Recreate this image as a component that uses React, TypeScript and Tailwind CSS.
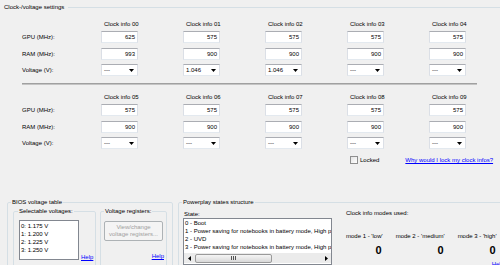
import React from 'react';

type ClockCol = { gpu: string; ram: string; volt: string };

const topCols: ClockCol[] = [
  { gpu: '625', ram: '993', volt: '---' },
  { gpu: '575', ram: '900', volt: '1.046' },
  { gpu: '575', ram: '900', volt: '1.046' },
  { gpu: '575', ram: '900', volt: '---' },
  { gpu: '575', ram: '900', volt: '---' },
];

const bottomCols: ClockCol[] = [0, 1, 2, 3, 4].map(() => ({ gpu: '575', ram: '900', volt: '---' }));

const TextBox = ({ value }: { value: string }) => (
  <div className="h-[12px] w-[37px] bg-white border border-[#dbdfe6] border-t-[#abadb3] border-b-[#e3e9ef] flex items-center justify-end pr-[2px]">
    {value}
  </div>
);

const Combo = ({ value }: { value: string }) => (
  <div className="h-[12px] w-[37px] bg-white border border-[#dbdfe6] border-t-[#abadb3] border-b-[#e3e9ef] flex items-center justify-between pl-[2px] pr-[3px]">
    <span>{value}</span>
    <svg width="5" height="3" viewBox="0 0 5 3">
      <path d="M0 0h5L2.5 3z" fill="#000" />
    </svg>
  </div>
);

// label column + 5 value columns, 82px apart
const rowGrid = 'grid grid-cols-[34px_repeat(5,37px)] gap-x-[45px] items-center';

const ClockBlock = ({ start, cols }: { start: number; cols: ClockCol[] }) => (
  <div className="ml-[22px] flex flex-col">
    <div className={`${rowGrid} h-[10px]`}>
      <div />
      {cols.map((_, i) => (
        <div key={i} className="pl-[3px] whitespace-nowrap">
          Clock info {String(start + i).padStart(2, '0')}
        </div>
      ))}
    </div>
    <div className={`${rowGrid} mt-[2px]`}>
      <div className="whitespace-nowrap">GPU (MHz):</div>
      {cols.map((c, i) => (
        <TextBox key={i} value={c.gpu} />
      ))}
    </div>
    <div className={`${rowGrid} mt-[5px]`}>
      <div className="whitespace-nowrap">RAM (MHz):</div>
      {cols.map((c, i) => (
        <TextBox key={i} value={c.ram} />
      ))}
    </div>
    <div className={`${rowGrid} mt-[4px]`}>
      <div className="whitespace-nowrap">Voltage (V):</div>
      {cols.map((c, i) => (
        <Combo key={i} value={c.volt} />
      ))}
    </div>
  </div>
);

const Link = ({ children, className = '' }: { children: React.ReactNode; className?: string }) => (
  <span className={`text-[#0000ff] underline whitespace-nowrap ${className}`}>{children}</span>
);

const powerStates = [
  '0 - Boot',
  '1 - Power saving for notebooks in battery mode, High performance',
  '2 - UVD',
  '3 - Power saving for notebooks in battery mode, High performance',
];

const modes = [
  { label: "mode 1 - 'low'", value: '0' },
  { label: "mode 2 - 'medium'", value: '0' },
  { label: "mode 3 - 'high'", value: '0' },
];

export default function App() {
  return (
    <div className="w-[500px] h-[265px] overflow-hidden bg-[#f0f0f0] text-black text-[6px] leading-[8px] font-['Liberation_Sans',Arial,sans-serif]">
      {/* Clock-/voltage settings */}
      <div className="mt-[3px] h-[8px] flex items-center pl-[4px] gap-[4px]">
        <span className="whitespace-nowrap">Clock-/voltage settings</span>
        <div className="flex-1 h-px bg-[#d5dfe5]" />
      </div>

      <div className="mt-[8px]">
        <ClockBlock start={0} cols={topCols} />
      </div>

      <div className="ml-[22px] mt-[7px] w-[455px] h-[2px] bg-[#a0a0a0] border-b border-[#c4c4c4]" />

      <div className="mt-[7px]">
        <ClockBlock start={5} cols={bottomCols} />
      </div>

      <div className="mt-[7px] h-[8px] ml-[350px] flex items-center">
        <div className="w-[8px] h-[8px] border border-[#8f8f8f] bg-gradient-to-br from-[#e4e4e4] to-white" />
        <span className="ml-[2px]">Locked</span>
        <Link className="ml-[26px]">Why would I lock my clock infos?</Link>
      </div>

      {/* bottom group boxes */}
      <div className="mt-[34px] flex">
        <fieldset className="ml-[7px] w-[166px] h-[80px] shrink-0 border border-[#d5dfe5] rounded-[2px] flex">
          <legend className="ml-[3px] px-[1px] leading-[8px]">BIOS voltage table</legend>
          <div className="flex gap-[4px] pl-[5px] mt-[1px]">
            <fieldset className="w-[83px] h-[70px] border border-[#d5dfe5] rounded-[2px]">
              <legend className="ml-[4px] px-[1px] leading-[8px]">Selectable voltages:</legend>
              <div className="flex items-end pl-[5px] mt-[5px]">
                <div className="w-[60px] h-[40px] bg-white border border-[#828790] pl-[1px] pt-[1px]">
                  <div>0: 1.175 V</div>
                  <div>1: 1.200 V</div>
                  <div>2: 1.225 V</div>
                  <div>3: 1.250 V</div>
                </div>
                <Link className="ml-[2px] -mb-[1px]">Help</Link>
              </div>
            </fieldset>
            <fieldset className="w-[67px] h-[70px] border border-[#d5dfe5] rounded-[2px]">
              <legend className="ml-[3px] px-[1px] leading-[8px]">Voltage registers:</legend>
              <div className="flex flex-col pl-[3px] mt-[6px]">
                <div className="w-[59px] h-[20px] border border-[#adb2b5] rounded-[2px] bg-[#f4f4f4] flex flex-col items-center justify-center text-[#a0a0a0] leading-[7px]">
                  <span>View/change</span>
                  <span>voltage registers...</span>
                </div>
                <div className="flex justify-end pr-[2px] mt-[11px]">
                  <Link>Help</Link>
                </div>
              </div>
            </fieldset>
          </div>
        </fieldset>

        <fieldset className="ml-[5px] w-[340px] h-[80px] shrink-0 border border-[#d5dfe5] rounded-[2px]">
          <legend className="ml-[3px] px-[1px] leading-[8px]">Powerplay states structure</legend>
          <div className="flex pl-[4px]">
            <div className="flex flex-col mt-[4px]">
              <div className="ml-[1px]">State:</div>
              <div className="w-[149px] h-[47px] bg-white border border-[#828790] flex flex-col overflow-hidden">
                <div className="pl-[1px] whitespace-nowrap overflow-hidden">
                  {powerStates.map((s) => (
                    <div key={s}>{s}</div>
                  ))}
                </div>
                <div className="mt-[2px] h-[10px] flex items-center bg-[#ebebeb]">
                  <div className="w-[10px] flex justify-center">
                    <svg width="3" height="5" viewBox="0 0 3 5">
                      <path d="M3 0v5L0 2.5z" fill="#000" />
                    </svg>
                  </div>
                  <div className="ml-[1px] w-[77px] h-[9px] rounded-[2px] border border-[#9a9a9a] bg-gradient-to-b from-[#f5f5f5] to-[#d9d9d9] flex items-center justify-center gap-[1px]">
                    <div className="w-px h-[4px] bg-[#555]" />
                    <div className="w-px h-[4px] bg-[#555]" />
                    <div className="w-px h-[4px] bg-[#555]" />
                  </div>
                  <div className="flex-1" />
                  <div className="w-[10px] flex justify-center">
                    <svg width="3" height="5" viewBox="0 0 3 5">
                      <path d="M0 0v5L3 2.5z" fill="#000" />
                    </svg>
                  </div>
                </div>
              </div>
            </div>

            <div className="ml-[14px] mt-[3px] w-[158px] flex flex-col">
              <div className="whitespace-nowrap">Clock info modes used:</div>
              <div className="mt-[15px] flex gap-[13px]">
                {modes.map((m) => (
                  <div key={m.label} className="flex flex-col items-end">
                    <span className="whitespace-nowrap">{m.label}</span>
                    <span className="mt-[4px] mr-[1px] text-[11px] leading-[12px] font-bold">{m.value}</span>
                  </div>
                ))}
              </div>
              <div className="flex justify-end mt-[4px]">
                <Link>Help</Link>
              </div>
            </div>
          </div>
        </fieldset>
      </div>
    </div>
  );
}
